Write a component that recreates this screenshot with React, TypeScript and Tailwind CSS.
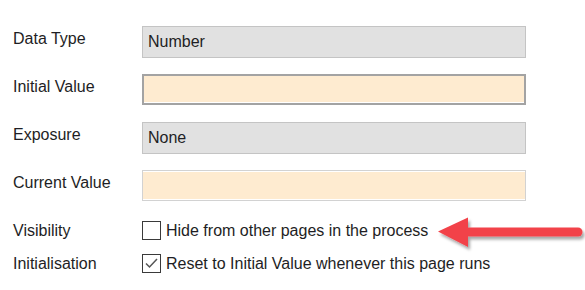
type FieldRow = {
  label: string;
  value?: string;
  kind: 'readonly' | 'edit' | 'editLight';
};

const fields: FieldRow[] = [
  { label: 'Data Type', value: 'Number', kind: 'readonly' },
  { label: 'Initial Value', kind: 'edit' },
  { label: 'Exposure', value: 'None', kind: 'readonly' },
  { label: 'Current Value', kind: 'editLight' },
];

function FieldBox({ value, kind }: { value?: string; kind: FieldRow['kind'] }) {
  if (kind === 'readonly') {
    return (
      <div className="flex h-[32px] w-[384px] items-center border border-[#c4c4c4] bg-[#e1e1e1] pl-[5px] text-[#1e1e24]">
        {value}
      </div>
    );
  }
  if (kind === 'edit') {
    return (
      <div className="h-[31px] w-[384px] border-2 border-[#a3a3a3]">
        <div className="h-full w-full border-b border-white bg-[#feebd0]" />
      </div>
    );
  }
  return (
    <div className="h-[31px] w-[384px] border border-[#d2d2d2]">
      <div className="h-full w-full border-y border-white bg-[#feebd0]" />
    </div>
  );
}

function CheckRow({ label, text, checked }: { label: string; text: string; checked: boolean }) {
  return (
    <div className="flex h-[19px] items-center">
      <div className="w-[142px] pl-[13px]">{label}</div>
      <span className="flex h-[19px] w-[19px] items-center justify-center border-[1.5px] border-[#3a3a3a] bg-white">
        {checked && (
          <svg width="15" height="15" viewBox="0 0 15 15" fill="none">
            <path d="M2 7.5l3.5 3.5L13 3" stroke="#555" strokeWidth="1.5" />
          </svg>
        )}
      </span>
      <span className="ml-[5px]">{text}</span>
    </div>
  );
}

export default function App() {
  return (
    <div
      className="relative h-[290px] w-[585px] overflow-hidden bg-white pt-[26px] text-[16px] leading-[20px] text-[#1e1e24]"
      style={{ fontFamily: '"Liberation Sans", Arial, sans-serif' }}
    >
      <div className="flex flex-col">
        {fields.map((f) => (
          <div key={f.label} className="flex h-[48px] items-start">
            <div className="w-[142px] pl-[13px] pt-[3px]">{f.label}</div>
            <FieldBox value={f.value} kind={f.kind} />
          </div>
        ))}
      </div>

      <div className="mt-[3px] flex flex-col gap-[14px]">
        <CheckRow label="Visibility" text="Hide from other pages in the process" checked={false} />
        <CheckRow label="Initialisation" text="Reset to Initial Value whenever this page runs" checked />
      </div>

      {/* annotation arrow */}
      <svg className="absolute left-[432px] top-[208px]" width="153" height="48" viewBox="0 0 153 48">
        <defs>
          <filter id="sh" x="-10%" y="-30%" width="120%" height="170%">
            <feDropShadow dx="2" dy="3" stdDeviation="1.5" floodColor="#000" floodOpacity="0.35" />
          </filter>
        </defs>
        <g filter="url(#sh)">
          <line x1="36" y1="24" x2="146" y2="24" stroke="#f2434a" strokeWidth="9" strokeLinecap="round" />
          <path d="M6 23.5L36 9.5L36 39z" fill="#f2434a" />
        </g>
      </svg>
    </div>
  );
}
